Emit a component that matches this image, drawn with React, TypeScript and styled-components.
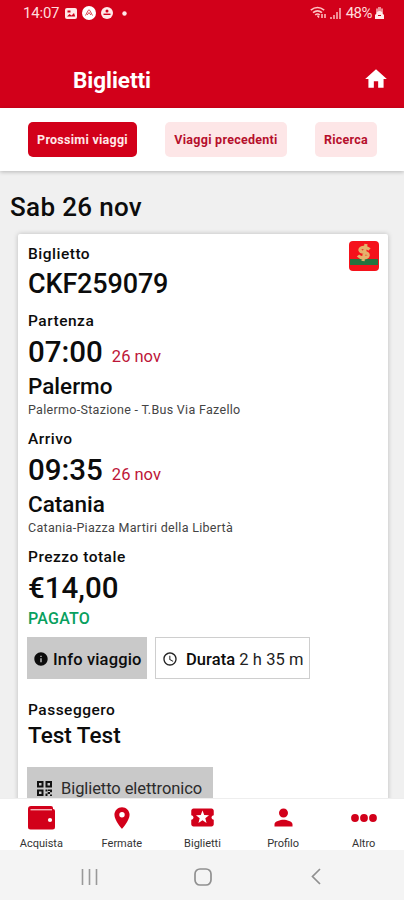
import React from "react";
import styled, { createGlobalStyle } from "styled-components";
import { MdHome, MdInfo, MdLocalPlay, MdLocationOn, MdPerson, MdAccessTime } from "react-icons/md";

const RED = "#d2001a";

const GlobalStyle = createGlobalStyle`
  * { box-sizing: border-box; }
  body { margin: 0; font-family: Roboto, "Liberation Sans", sans-serif; color: #0c0c0c; }
  svg { display: block; flex: none; }
`;

const Screen = styled.div`
  width: 404px;
  height: 900px;
  overflow: hidden;
  display: flex;
  flex-direction: column;
  background: #f0f0f0;
`;

const Header = styled.header`
  height: 108px;
  flex: none;
  background: ${RED};
  color: #fff;
  display: flex;
  flex-direction: column;
`;

const StatusBar = styled.div`
  height: 26px;
  padding: 0 20px 0 23px;
  display: flex;
  justify-content: space-between;
  align-items: center;
  font-size: 15px;
  color: #ffdcdc;
`;

const StatusGroup = styled.div<{ $gap: number }>`
  display: flex;
  align-items: center;
  gap: ${(p) => p.$gap}px;
`;

const Clock = styled.span`
  letter-spacing: -0.2px;
  margin-right: 1px;
`;

const Battery = styled.span`
  letter-spacing: -0.5px;
  margin-left: 2px;
`;

const TitleBar = styled.div`
  height: 54px;
  padding: 0 15px 0 73px;
  display: flex;
  align-items: center;
  justify-content: space-between;
  margin-top: 26px;
`;

const Title = styled.h1`
  margin: 1px 0 0;
  font-size: 22.5px;
  font-weight: 700;
  letter-spacing: -0.05px;
`;

const Tabs = styled.nav`
  height: 63px;
  flex: none;
  padding: 14px 27px 0 28px;
  display: flex;
  justify-content: space-between;
  background: #fff;
  box-shadow: 0 1px 4px rgba(0, 0, 0, 0.24);
`;

const Tab = styled.button<{ $width: number; $active?: boolean }>`
  width: ${(p) => p.$width}px;
  height: 35px;
  padding: 0;
  border: 0;
  border-radius: 5px;
  font: 700 12.5px Roboto, sans-serif;
  letter-spacing: 0.27px;
  white-space: nowrap;
  background: ${(p) => (p.$active ? RED : "#fde6e7")};
  color: ${(p) => (p.$active ? "#ffe8e8" : "#b60f2c")};
`;

const Content = styled.main`
  flex: 1;
  min-height: 0;
  overflow: hidden;
  padding: 0 16px 0 10px;
`;

const DayTitle = styled.h2`
  margin: 0;
  height: 63px;
  padding-top: 19px;
  font-size: 26px;
  line-height: 34px;
  font-weight: 500;
  letter-spacing: 0.33px;
`;

const Card = styled.article`
  margin-left: 8px;
  height: 620px;
  padding: 10px 10px 0;
  background: #fff;
  border-radius: 2px 2px 0 0;
  box-shadow: 0 0 5px rgba(0, 0, 0, 0.22);
`;

const CardTop = styled.div`
  display: flex;
  justify-content: space-between;
  height: 67px;
`;

const PaymentBadge = styled.div`
  margin: -3px -1px 0 0;
`;

const Label = styled.div`
  font-size: 15.5px;
  line-height: 20px;
  font-weight: 500;
  letter-spacing: 0.5px;
`;

const Code = styled.div`
  margin-top: 3px;
  font-size: 27px;
  line-height: 34px;
  font-weight: 500;
  letter-spacing: -0.15px;
`;

const Stop = styled.section`
  height: 118px;
`;

const TimeRow = styled.div`
  display: flex;
  align-items: baseline;
  gap: 9px;
  margin-top: 4px;
  height: 34px;
`;

const Big = styled.div`
  font-size: 29.5px;
  line-height: 34px;
  font-weight: 500;
`;

const DateText = styled.span`
  font-size: 16.5px;
  color: #bd1538;
`;

const City = styled.div`
  margin-top: 4px;
  font-size: 22.5px;
  line-height: 26px;
  font-weight: 500;
`;

const Address = styled.div`
  margin-top: 3px;
  font-size: 12.5px;
  line-height: 16px;
  letter-spacing: 0.3px;
  color: #444;
`;

const Price = styled(Big)`
  margin-top: 4px;
`;

const Paid = styled.div`
  margin-top: 4px;
  font-size: 16px;
  line-height: 19px;
  font-weight: 500;
  letter-spacing: 0.25px;
  color: #08a05e;
`;

const Actions = styled.div`
  display: flex;
  gap: 8px;
  margin: 9px 0 21px -1px;
`;

const InfoButton = styled.button`
  width: 120px;
  height: 42px;
  border: 0;
  padding: 2px 0 0 6px;
  display: flex;
  align-items: center;
  gap: 4px;
  background: #c9c9c9;
  color: #0c0c0c;
  font: 500 16.5px Roboto, sans-serif;
  letter-spacing: 0.15px;
  white-space: nowrap;
`;

const Duration = styled.div`
  width: 155px;
  height: 42px;
  border: 1px solid #cecece;
  padding: 2px 0 0 6px;
  display: flex;
  align-items: center;
  gap: 8px;
  font-size: 16.5px;
  letter-spacing: 0.07px;
  white-space: nowrap;
  color: #222;
  b { font-weight: 500; color: #0c0c0c; }
`;

const Passenger = styled(City)`
  margin-top: 2px;
`;

const TicketButton = styled.button`
  margin: 19px 0 0 -1px;
  width: 186px;
  height: 42px;
  border: 0;
  padding: 1px 0 0 10px;
  display: flex;
  align-items: center;
  gap: 9px;
  background: #c9c9c9;
  color: #2c2c2c;
  font: 400 16.5px Roboto, sans-serif;
  letter-spacing: -0.08px;
  white-space: nowrap;
`;

const BottomNav = styled.nav`
  flex: none;
  height: 52px;
  padding-left: 1px;
  display: grid;
  grid-template-columns: repeat(5, 1fr);
  background: #fff;
  border-top: 1px solid #eee;
`;

const NavItem = styled.div`
  display: flex;
  flex-direction: column;
  align-items: center;
  color: ${RED};
`;

const NavIcon = styled.div`
  height: 37px;
  display: flex;
  align-items: center;
`;

const NavLabel = styled.span`
  font-size: 11px;
  line-height: 15px;
  color: #333;
`;

const SystemBar = styled.footer`
  flex: none;
  height: 50px;
  padding: 3px 0 0 33px;
  display: grid;
  grid-template-columns: 113px 113px 113px;
  align-items: center;
  justify-items: center;
  background: #f4f4f4;
`;

const GalleryIcon = () => (
  <svg width="12" height="11" viewBox="0 0 12 11">
    <rect width="12" height="11" rx="2" fill="#ffe9e9" />
    <path d="M2 8.5 4.5 6l2 1.5L9 5l1.2 3.5zM2.5 2.5h3v2h-3z" fill={RED} />
  </svg>
);
const CompassIcon = () => (
  <svg width="14" height="14" viewBox="0 0 14 14">
    <circle cx="7" cy="7" r="7" fill="#fff" />
    <path d="M3.500 9.500 6.200 4.400q.8-1.200 1.600 0l2.700 5.100M5.200 9 7 6.500 8.800 9" fill="none" stroke="#dc4552" strokeWidth="1" />
  </svg>
);
const AccountIcon = () => (
  <svg width="12" height="12" viewBox="0 0 12 12">
    <circle cx="6" cy="6" r="6" fill="#ffe9e9" />
    <path d="M2.500 6.600h7v1.400h-7z" fill={RED} />
    <circle cx="6" cy="4" r="1.500" fill={RED} />
  </svg>
);
const DotIcon = () => (
  <svg width="5" height="5"><circle cx="2.5" cy="2.5" r="2.2" fill="#ffe9e9" /></svg>
);
const WifiIcon = () => (
  <svg width="17" height="14" viewBox="0 0 17 14" fill="none" stroke="#ffc4c4">
    <path d="M.8 4.2Q7.5-1.2 14.2 4.2M3 6.7q4.5-3.7 9 0M5.2 9q2.3-2 4.6 0" strokeWidth="1.6" />
    <path d="m7.5 9.5 1.6 2M12 8v4M15 8v4" strokeWidth="1.5" />
  </svg>
);
const SignalIcon = () => (
  <svg width="11" height="11" viewBox="0 0 11 11" fill="#ef8d95">
    <path d="M0 9h2v2H0zM3 7h2v4H3zM6 4h2v7H6zM9 0h2v11H9z" />
  </svg>
);
const BatteryIcon = () => (
  <svg width="9" height="13" viewBox="0 0 9 13">
    <path d="M3 0h3v1.5h2V6H1V1.5h2z" fill="#ef8d95" />
    <path d="M1 7q1-3 3.5-3T8 7l1 1v4H0V8z" fill="#ffeaea" />
    <path d="M3 8h3v1H3z" fill={RED} />
  </svg>
);
const CashIcon = () => (
  <svg width="30" height="30" viewBox="0 0 30 30">
    <rect width="30" height="30" rx="4" fill="#f5121b" />
    <path d="M1 18h28v6H1z" fill="#23733f" />
    <path
      d="M20.500 8.500Q18 6 14.500 6.300 10.500 7 11 9.300q.5 1.700 4 2 4.500.6 4.200 3-.7 2.700-5 2.500Q11 16.700 9 14.500M17 3l-3 17"
      fill="none" stroke="#e5b36b" strokeWidth="3.200"
    />
  </svg>
);
const QrIcon = () => (
  <svg width="15" height="15" viewBox="0 0 15 15">
    <path d="M1 1h4.5v4.5H1zM9.5 1H14v4.5H9.5zM1 9.5h4.5V14H1z" fill="none" stroke="#111" strokeWidth="2" />
    <path d="M8.5 8.5h2v2h-2zM11 8.5h4v2.7h-2V13h-2.3v-2H13v-1h-2zM8.5 12.5h2V15h-2zM13 13.5h2V15h-2z" fill="#111" />
  </svg>
);
const WalletIcon = () => (
  <svg width="27" height="24" viewBox="0 0 27 24">
    <path d="M3 0h20q2 0 2 2v1q2 0 2 2v16q0 2.500-2.500 2.500h-22Q0 23.500 0 21V3q0-3 3-3z" fill={RED} />
    <path d="M2.500 3.700H24" stroke="#f7b3ba" strokeWidth="1.400" />
    <circle cx="22" cy="14" r="2.100" fill="#fff" />
  </svg>
);
const MoreIcon = () => (
  <svg width="26" height="8" viewBox="0 0 26 8" fill={RED}>
    <circle cx="4" cy="4" r="3.900" /><circle cx="13" cy="4" r="3.900" /><circle cx="22" cy="4" r="3.900" />
  </svg>
);

const navItems = [
  { label: "Acquista", icon: <WalletIcon /> },
  { label: "Fermate", icon: <MdLocationOn size={26} /> },
  { label: "Biglietti", icon: <MdLocalPlay size={27} /> },
  { label: "Profilo", icon: <MdPerson size={27} /> },
  { label: "Altro", icon: <MoreIcon /> },
];

const stops = [
  { label: "Partenza", time: "07:00", city: "Palermo", address: "Palermo-Stazione - T.Bus Via Fazello" },
  { label: "Arrivo", time: "09:35", city: "Catania", address: "Catania-Piazza Martiri della Libertà" },
];

export default function App() {
  return (
    <Screen>
      <GlobalStyle />
      <Header>
        <StatusBar>
          <StatusGroup $gap={5}>
            <Clock>14:07</Clock>
            <GalleryIcon />
            <CompassIcon />
            <AccountIcon />
            <StatusGroup $gap={4}><span /><DotIcon /></StatusGroup>
          </StatusGroup>
          <StatusGroup $gap={3}>
            <WifiIcon />
            <SignalIcon />
            <Battery>48%</Battery>
            <BatteryIcon />
          </StatusGroup>
        </StatusBar>
        <TitleBar>
          <Title>Biglietti</Title>
          <MdHome size={26} />
        </TitleBar>
      </Header>
      <Tabs>
        <Tab $width={109} $active>Prossimi viaggi</Tab>
        <Tab $width={122}>Viaggi precedenti</Tab>
        <Tab $width={62}>Ricerca</Tab>
      </Tabs>
      <Content>
        <DayTitle>Sab 26 nov</DayTitle>
        <Card>
          <CardTop>
            <div>
              <Label>Biglietto</Label>
              <Code>CKF259079</Code>
            </div>
            <PaymentBadge><CashIcon /></PaymentBadge>
          </CardTop>
          {stops.map((s) => (
            <Stop key={s.label}>
              <Label>{s.label}</Label>
              <TimeRow>
                <Big>{s.time}</Big>
                <DateText>26 nov</DateText>
              </TimeRow>
              <City>{s.city}</City>
              <Address>{s.address}</Address>
            </Stop>
          ))}
          <Label>Prezzo totale</Label>
          <Price>€14,00</Price>
          <Paid>PAGATO</Paid>
          <Actions>
            <InfoButton><MdInfo size={16} />Info viaggio</InfoButton>
            <Duration><MdAccessTime size={16} /><span><b>Durata</b> 2 h 35 m</span></Duration>
          </Actions>
          <Label>Passeggero</Label>
          <Passenger>Test Test</Passenger>
          <TicketButton><QrIcon />Biglietto elettronico</TicketButton>
        </Card>
      </Content>
      <BottomNav>
        {navItems.map((n) => (
          <NavItem key={n.label}>
            <NavIcon>{n.icon}</NavIcon>
            <NavLabel>{n.label}</NavLabel>
          </NavItem>
        ))}
      </BottomNav>
      <SystemBar>
        <svg width="17" height="16"><path d="M1.500 0v16M8.500 0v16M15.500 0v16" stroke="#999" strokeWidth="1.600" /></svg>
        <svg width="18" height="18"><rect x="1" y="1" width="16" height="16" rx="5" fill="none" stroke="#909090" strokeWidth="1.700" /></svg>
        <svg width="10" height="17"><path d="M9 1 1.500 8.500 9 16" fill="none" stroke="#909090" strokeWidth="1.700" /></svg>
      </SystemBar>
    </Screen>
  );
}
